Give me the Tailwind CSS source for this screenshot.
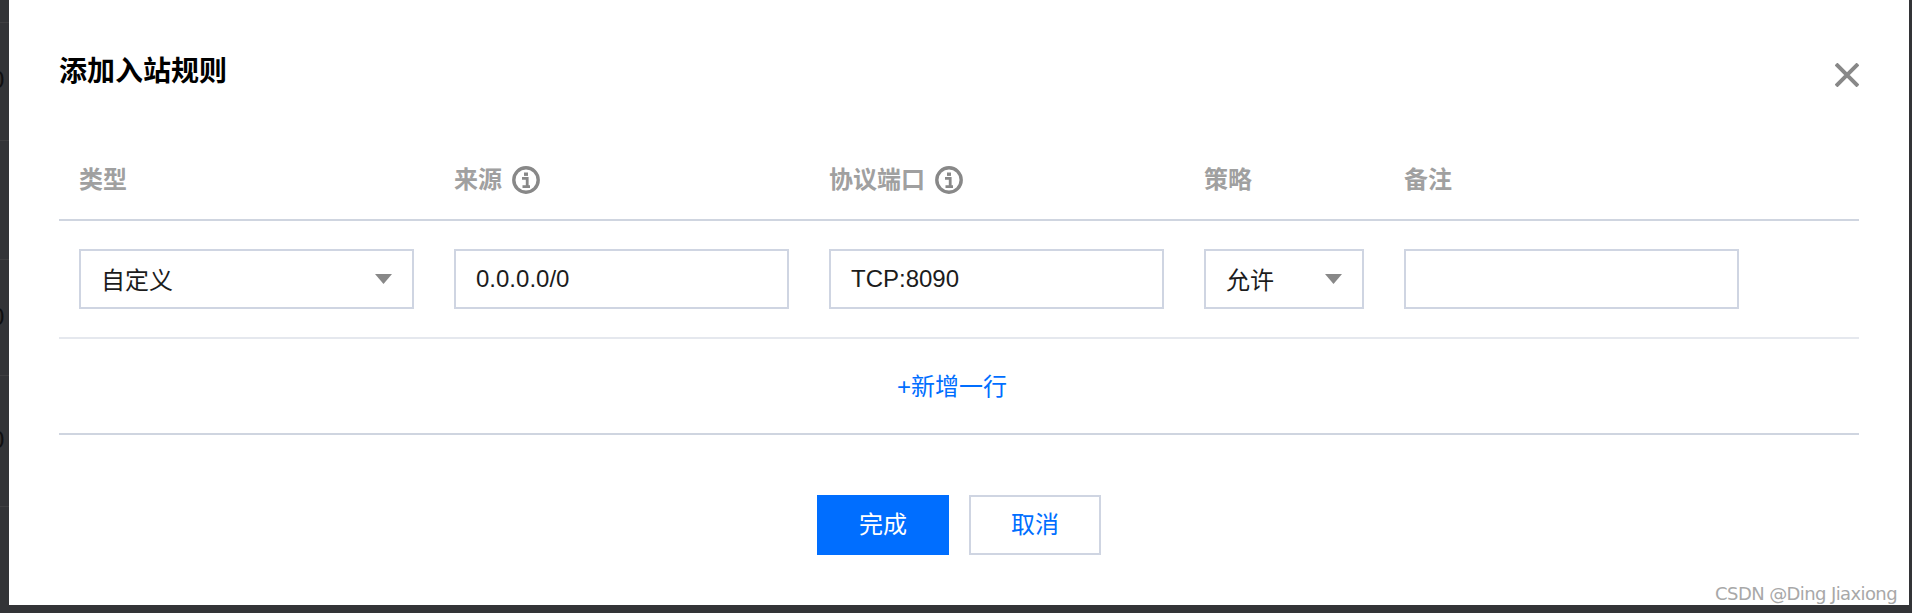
<!DOCTYPE html>
<html lang="zh-CN">
<head>
<meta charset="utf-8">
<script src="https://cdn.jsdelivr.net/npm/@tailwindcss/browser@4"></script>
</head>
<body class="m-0">
<div class="flex w-[1912px] h-[613px] overflow-hidden bg-[#333437] pr-[3px] pb-[8px] font-['Liberation_Sans','Noto_Sans_CJK_SC',sans-serif] text-[24px] text-[#1c1c1c]">
  <div class="relative w-[9px] shrink-0 overflow-hidden text-[#0f0f10] text-[24px] leading-none">
    <div class="absolute left-0 top-[22px] w-full h-px bg-[#3f3f41]"></div>
    <div class="absolute left-0 top-[140px] w-full h-px bg-[#3f3f41]"></div>
    <div class="absolute left-0 top-[259px] w-full h-px bg-[#3f3f41]"></div>
    <div class="absolute left-0 top-[375px] w-full h-px bg-[#3f3f41]"></div>
    <div class="absolute left-0 top-[506px] w-full h-px bg-[#3f3f41]"></div>
    <span class="absolute left-[-9px] top-[68px]">0</span>
    <span class="absolute left-[-9px] top-[305px]">0</span>
    <span class="absolute left-[-9px] top-[428px]">0</span>
  </div>
  <div class="relative flex-1 bg-white px-[50px] flex flex-col">
    <div class="h-[142px] flex justify-between items-start">
      <h1 class="mt-[53px] text-[28px] leading-[38px] font-bold text-black">添加入站规则</h1>
      <svg class="mt-[63px]" width="24" height="24" viewBox="0 0 24 24" fill="none" stroke="#888888" stroke-width="4">
        <path d="M1 1 L23 23 M23 1 L1 23"/>
      </svg>
    </div>
    <div class="grid grid-cols-[375px_375px_375px_200px_1fr] pl-[20px] h-[79px] items-start pt-[22px] border-b-2 border-[#cfd5e0] font-bold text-[#a0a0a0] leading-[32px]">
      <div>类型</div>
      <div class="flex items-center gap-[10px]">来源
        <svg width="28" height="28" viewBox="0 0 28 28" fill="none">
          <circle cx="14" cy="14" r="12.2" stroke="#888888" stroke-width="3.4"/>
          <rect x="12" y="6.5" width="4" height="3.4" fill="#888888"/>
          <path d="M10 12.3 H15.2 V20 M10.5 20.6 H18" stroke="#888888" stroke-width="2.8"/>
        </svg>
      </div>
      <div class="flex items-center gap-[10px]">协议端口
        <svg width="28" height="28" viewBox="0 0 28 28" fill="none">
          <circle cx="14" cy="14" r="12.2" stroke="#888888" stroke-width="3.4"/>
          <rect x="12" y="6.5" width="4" height="3.4" fill="#888888"/>
          <path d="M10 12.3 H15.2 V20 M10.5 20.6 H18" stroke="#888888" stroke-width="2.8"/>
        </svg>
      </div>
      <div>策略</div>
      <div>备注</div>
    </div>
    <div class="grid grid-cols-[375px_375px_375px_200px_1fr] pl-[20px] h-[118px] pt-[28px] items-start border-b-2 border-[#e5e8ee]">
      <div class="w-[335px] h-[60px] border-2 border-[#cfd5e2] pl-[20px] pr-[20px] flex items-center justify-between">
        <span class="relative top-[2px]">自定义</span>
        <svg width="17" height="10" viewBox="0 0 17 10"><path d="M0 0 H17 L8.5 10 Z" fill="#888888"/></svg>
      </div>
      <div class="w-[335px] h-[60px] border-2 border-[#cfd5e2] pl-[20px] flex items-center"><span>0.0.0.0/0</span></div>
      <div class="w-[335px] h-[60px] border-2 border-[#cfd5e2] pl-[20px] flex items-center"><span>TCP:8090</span></div>
      <div class="w-[160px] h-[60px] border-2 border-[#cfd5e2] pl-[20px] pr-[20px] flex items-center justify-between">
        <span class="relative top-[2px]">允许</span>
        <svg width="17" height="10" viewBox="0 0 17 10"><path d="M0 0 H17 L8.5 10 Z" fill="#888888"/></svg>
      </div>
      <div class="w-[335px] h-[60px] border-2 border-[#cfd5e2]"></div>
    </div>
    <div class="h-[96px] flex items-center justify-center border-b-2 border-[#cfd5e0] text-[#006eff] pt-[2px] pr-[14px]">+新增一行</div>
    <div class="flex justify-center gap-[20px] mt-[60px]">
      <button class="w-[132px] h-[60px] bg-[#006eff] text-white">完成</button>
      <button class="w-[132px] h-[60px] border-2 border-[#cfd5e2] bg-white text-[#006eff]">取消</button>
    </div>
    <div class="absolute right-[12px] bottom-[-1px] text-[18px] leading-[24px] text-[#a8a8a8] font-['DejaVu_Sans',sans-serif] tracking-[-0.6px] whitespace-nowrap">CSDN @Ding Jiaxiong</div>
  </div>
</div>
</body>
</html>
